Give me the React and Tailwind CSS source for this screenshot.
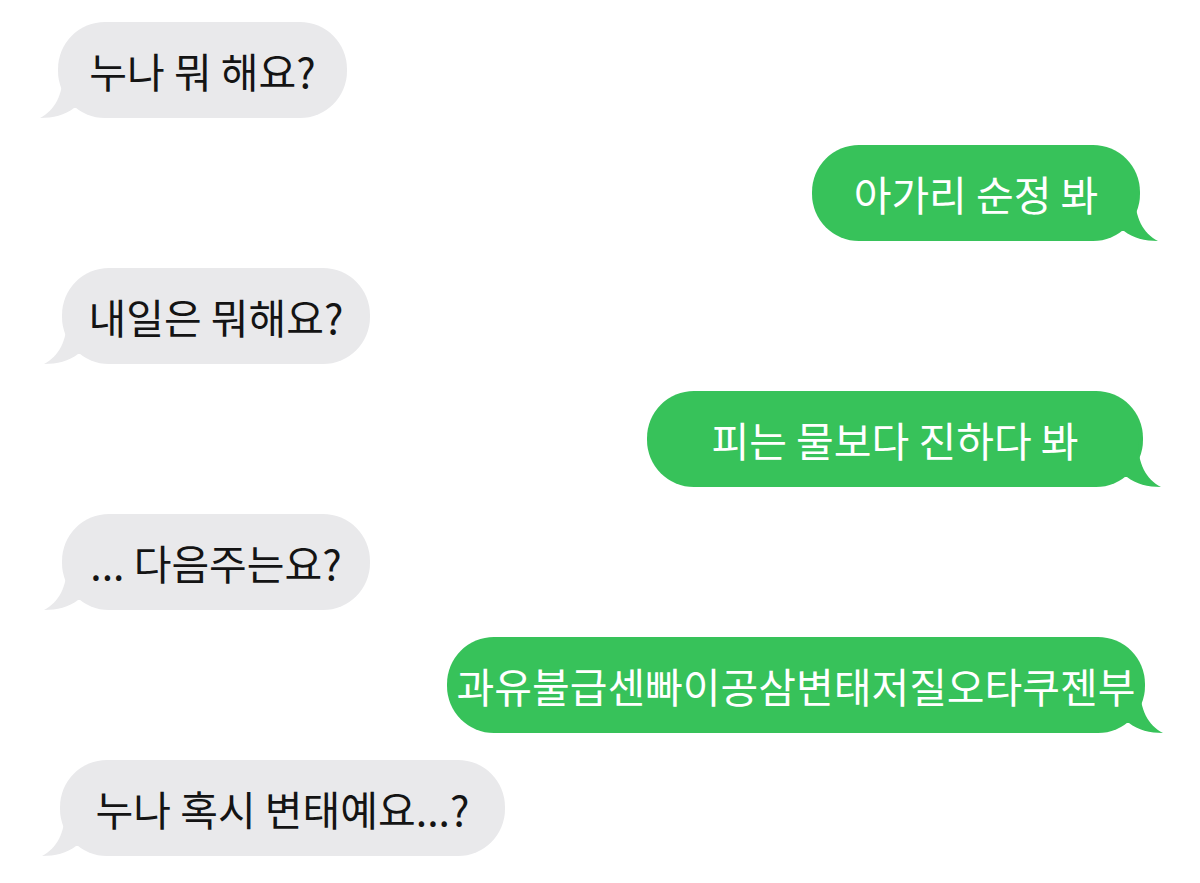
import React from "react";

const messages = [
  { id: 1, side: "left", text: "누나 뭐 해요?", box: "w-[289px] ml-[58px]" },
  { id: 2, side: "right", text: "아가리 순정 봐", box: "w-[328px] mr-[60px]" },
  { id: 3, side: "left", text: "내일은 뭐해요?", box: "w-[308px] ml-[62px]" },
  { id: 4, side: "right", text: "피는 물보다 진하다 봐", box: "w-[496px] mr-[57px]" },
  { id: 5, side: "left", text: "... 다음주는요?", box: "w-[308px] ml-[62px]" },
  { id: 6, side: "right", text: "과유불급센빠이공삼변태저질오타쿠젠부", box: "w-[698px] mr-[55px]" },
  { id: 7, side: "left", text: "누나 혹시 변태예요...?", box: "w-[445px] ml-[60px]" },
];

function Tail({ side, color }) {
  if (side === "left") {
    return (
      <svg
        className="absolute bottom-0 left-[-18px]"
        width="42"
        height="46"
        viewBox="0 0 42 46"
      >
        <path
          d="M23 0 C23 23 15 38 0 46 C13 46 25 43 34 36 L42 36 L42 0 Z"
          fill={color}
        />
      </svg>
    );
  }
  return (
    <svg
      className="absolute bottom-0 right-[-18px]"
      width="42"
      height="46"
      viewBox="0 0 42 46"
    >
      <path
        d="M19 0 C19 23 27 38 42 46 C29 46 17 43 8 36 L0 36 L0 0 Z"
        fill={color}
      />
    </svg>
  );
}

function Bubble({ side, text, box }) {
  const isLeft = side === "left";
  return (
    <div className={isLeft ? "flex justify-start" : "flex justify-end"}>
      <div
        className={
          "relative h-[96px] rounded-[47px] flex items-center justify-center " +
          box +
          (isLeft ? " bg-[#e9e9eb] text-[#141414]" : " bg-[#37c25a] text-white")
        }
      >
        <Tail side={side} color={isLeft ? "#e9e9eb" : "#37c25a"} />
        <span className="relative whitespace-nowrap text-[41px] leading-none">
          {text}
        </span>
      </div>
    </div>
  );
}

export default function App() {
  return (
    <div
      className="w-[1200px] h-[883px] bg-white overflow-hidden pt-[22px] flex flex-col gap-[27px]"
      style={{ fontFamily: '"Noto Sans CJK KR", "Noto Sans", sans-serif' }}
    >
      {messages.map((m) => (
        <Bubble key={m.id} side={m.side} text={m.text} box={m.box} />
      ))}
    </div>
  );
}
